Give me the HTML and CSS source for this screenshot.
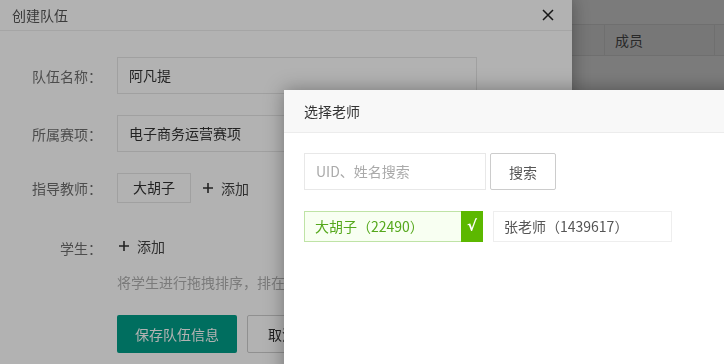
FILE: index.html
```html
<!DOCTYPE html>
<html lang="zh-CN">
<head>
  <meta charset="UTF-8" />
  <title>创建队伍</title>
  <link rel="stylesheet" href="styles.css">
</head>
<body>

  <!-- page behind the dialogs -->
  <div class="page">
    <div class="thead">
      <div class="th"></div>
      <div class="th">成员</div>
      <div class="th"></div>
    </div>
  </div>

  <div class="mask"></div>

  <!-- create team dialog -->
  <div class="modal team-modal">
    <div class="team-head">
      <span>创建队伍</span>
      <svg class="close" width="12" height="12" viewBox="0 0 12 12">
        <path d="M1 1L11 11M11 1L1 11" stroke="#222" stroke-width="1.5" fill="none" />
      </svg>
    </div>
    <div class="team-body">
      <div class="form-row">
        <label class="form-label">队伍名称：</label>
        <div class="form-input">阿凡提</div>
      </div>
      <div class="form-row">
        <label class="form-label">所属赛项：</label>
        <div class="form-input">电子商务运营赛项</div>
      </div>
      <div class="form-row">
        <label class="form-label">指导教师：</label>
        <span class="tag">大胡子</span>
        <span class="add">
          <svg width="10" height="10" viewBox="0 0 10 10">
            <path d="M5 0V10M0 5H10" stroke="#333" stroke-width="1.6" fill="none" />
          </svg>
          添加
        </span>
      </div>
      <div class="form-row short">
        <label class="form-label">学生：</label>
        <span class="add first">
          <svg width="10" height="10" viewBox="0 0 10 10">
            <path d="M5 0V10M0 5H10" stroke="#333" stroke-width="1.6" fill="none" />
          </svg>
          添加
        </span>
      </div>
      <p class="hint">将学生进行拖拽排序，排在第一位的学生为队长</p>
      <div class="actions">
        <button class="btn-save">保存队伍信息</button>
        <button class="btn-cancel">取消</button>
      </div>
    </div>
  </div>

  <div class="mask"></div>

  <!-- choose teacher dialog -->
  <div class="modal teacher-modal">
    <div class="teacher-head">选择老师</div>
    <div class="teacher-body">
      <div class="search">
        <div class="search-input">UID、姓名搜索</div>
        <button class="search-btn">搜索</button>
      </div>
      <div class="teachers">
        <div class="teacher selected">
          <span class="teacher-name">大胡子（22490）</span>
          <span class="check">√</span>
        </div>
        <div class="teacher">
          <span class="teacher-name">张老师（1439617）</span>
        </div>
      </div>
    </div>
  </div>

</body>
</html>
```

FILE: styles.css
```css
body {
  margin: 0;
  width: 724px;
  height: 364px;
  overflow: hidden;
  font-family: "Noto Sans CJK SC", "Microsoft YaHei", sans-serif;
  font-size: 14px;
  color: #333;
  background: #fbfbfb;
}

.page {
  padding-top: 24px;
}

.thead {
  display: grid;
  grid-template-columns: 605px 110px 1fr;
  height: 30px;
  background: #f3f3f3;
  border-top: 1px solid #e2e2e2;
  border-bottom: 1px solid #e2e2e2;
}

.th {
  border-right: 1px solid #e2e2e2;
  padding-left: 10px;
  line-height: 30px;
  color: #555;
}

.mask {
  position: fixed;
  inset: 0;
  background: rgba(0, 0, 0, 0.3);
}

.modal {
  position: fixed;
  background: #fff;
  box-shadow: 0 0 18px rgba(0, 0, 0, 0.35);
}

/* create team */
.team-modal {
  top: -1px;
  left: 0;
  width: 572px;
  height: 400px;
}

.team-head {
  display: flex;
  justify-content: space-between;
  align-items: center;
  height: 31px;
  padding: 0 18px 0 12px;
  border-bottom: 1px solid #ececec;
  color: #555;
}

.team-body {
  padding-top: 26px;
}

.form-row {
  display: flex;
  align-items: center;
  margin-bottom: 21px;
}

.form-row.short {
  margin-top: 34px;
  margin-bottom: 0;
  height: 22px;
}

.form-label {
  width: 102px;
  margin-right: 15px;
  text-align: right;
  color: #6f6f6f;
}

.form-input {
  width: 347px;
  height: 35px;
  line-height: 35px;
  padding-left: 11px;
  border: 1px solid #e6e6e6;
}

.tag {
  width: 72px;
  height: 28px;
  line-height: 26px;
  text-align: center;
  border: 1px solid #e6e6e6;
}

.add {
  display: flex;
  align-items: center;
  gap: 8px;
  margin-left: 12px;
  color: #444;
}

.add.first {
  margin-left: 2px;
  margin-top: -4px;
}

.hint {
  margin: 13px 0 0 117px;
  line-height: 20px;
  color: #b0b0b0;
  white-space: nowrap;
}

.actions {
  display: flex;
  gap: 10px;
  margin: 23px 0 0 117px;
}

.actions button {
  height: 38px;
  font: inherit;
  border-radius: 2px;
}

.btn-save {
  width: 120px;
  border: none;
  background: #009e88;
  color: #fff;
}

.btn-cancel {
  width: 70px;
  border: 1px solid #cfcfcf;
  background: #fff;
  color: #333;
}

/* choose teacher */
.teacher-modal {
  top: 90px;
  left: 284px;
  width: 480px;
  height: 320px;
}

.teacher-head {
  height: 42px;
  line-height: 42px;
  padding-left: 20px;
  background: #f8f8f8;
  border-bottom: 1px solid #ececec;
}

.teacher-body {
  padding: 20px 20px 0;
}

.search {
  display: flex;
  gap: 4px;
}

.search-input {
  width: 169px;
  height: 35px;
  line-height: 35px;
  padding-left: 11px;
  border: 1px solid #e8e8e8;
  color: #aaa;
}

.search-btn {
  width: 66px;
  height: 37px;
  font: inherit;
  color: #555;
  background: #fff;
  border: 1px solid #ccc;
  border-radius: 2px;
}

.teachers {
  display: flex;
  gap: 10px;
  margin-top: 21px;
}

.teacher {
  display: flex;
  justify-content: space-between;
  width: 177px;
  height: 29px;
  border: 1px solid #eee;
  color: #555;
}

.teacher-name {
  line-height: 29px;
  padding-left: 10px;
}

.teacher.selected {
  border-color: #bfe3a6;
  background: #f8fff2;
  color: #55a81c;
}

.check {
  width: 22px;
  margin: -1px -1px -1px 0;
  background: #5cb800;
  color: #fff;
  text-align: center;
  line-height: 30px;
  font-family: "DejaVu Sans", sans-serif;
  font-size: 15px;
  font-weight: bold;
}
```
